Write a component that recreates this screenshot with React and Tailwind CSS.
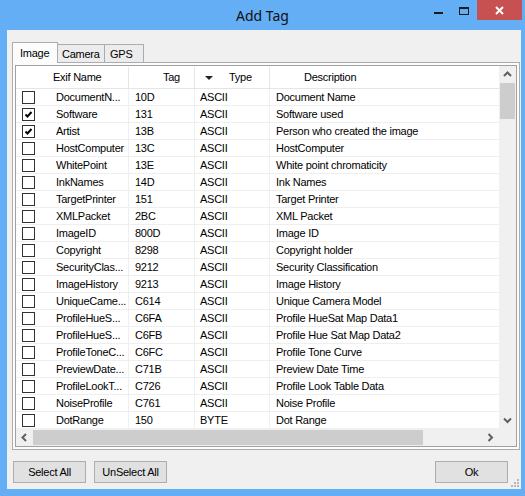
import React from "react";

const rows = [
  ["DocumentN...", "10D", "ASCII", "Document Name", false],
  ["Software", "131", "ASCII", "Software used", true],
  ["Artist", "13B", "ASCII", "Person who created the image", true],
  ["HostComputer", "13C", "ASCII", "HostComputer", false],
  ["WhitePoint", "13E", "ASCII", "White point chromaticity", false],
  ["InkNames", "14D", "ASCII", "Ink Names", false],
  ["TargetPrinter", "151", "ASCII", "Target Printer", false],
  ["XMLPacket", "2BC", "ASCII", "XML Packet", false],
  ["ImageID", "800D", "ASCII", "Image ID", false],
  ["Copyright", "8298", "ASCII", "Copyright holder", false],
  ["SecurityClas...", "9212", "ASCII", "Security Classification", false],
  ["ImageHistory", "9213", "ASCII", "Image History", false],
  ["UniqueCame...", "C614", "ASCII", "Unique Camera Model", false],
  ["ProfileHueS...", "C6FA", "ASCII", "Profile HueSat Map Data1", false],
  ["ProfileHueS...", "C6FB", "ASCII", "Profile Hue Sat Map Data2", false],
  ["ProfileToneC...", "C6FC", "ASCII", "Profile Tone Curve", false],
  ["PreviewDate...", "C71B", "ASCII", "Preview Date Time", false],
  ["ProfileLookT...", "C726", "ASCII", "Profile Look Table Data", false],
  ["NoiseProfile", "C761", "ASCII", "Noise Profile", false],
  ["DotRange", "150", "BYTE", "Dot Range", false],
];

const Check = ({ checked }) => (
  <span className="w-[13px] h-[13px] border border-[#333333] bg-white flex items-center justify-center shrink-0">
    {checked && (
      <svg width="9" height="9" viewBox="0 0 9 9">
        <path d="M1.5 4.5 L3.5 6.5 L7.5 2" fill="none" stroke="#000" strokeWidth="2" />
      </svg>
    )}
  </span>
);

// small scrollbar chevron, dir = up/down/left/right
const Chevron = ({ dir }) => {
  const d = {
    up: "M1 5 L4.5 1.5 L8 5",
    down: "M1 1.5 L4.5 5 L8 1.5",
    left: "M5 1 L1.5 4.5 L5 8",
    right: "M1.5 1 L5 4.5 L1.5 8",
  }[dir];
  const vert = dir === "up" || dir === "down";
  return (
    <svg width={vert ? 9 : 7} height={vert ? 7 : 9} viewBox={vert ? "0 0 9 7" : "0 0 7 9"}>
      <path d={d} fill="none" stroke="#606060" strokeWidth="2" />
    </svg>
  );
};

const WinButton = ({ children }) => (
  <button className="w-[73px] h-[22px] border border-[#adadad] bg-[#e1e1e1] text-[11px] text-black flex items-center justify-center pt-px">
    {children}
  </button>
);

export default function App() {
  return (
    <div className="w-[525px] h-[496px] bg-[#64aef6] flex flex-col overflow-hidden font-['Liberation_Sans',Arial,sans-serif] tracking-[-0.25px] text-black">
      {/* Title bar */}
      <div className="relative h-[30px] shrink-0 flex items-center justify-center">
        <span className="text-[14px] tracking-normal font-['Noto_Sans',sans-serif] text-[#111]">Add Tag</span>
        <div className="absolute top-0 right-[3px] flex items-start">
          <div className="w-[26px] h-[20px] flex justify-center pt-[12px]">
            <span className="block w-[9px] h-[2px] bg-[#1b1b1b]" />
          </div>
          <div className="w-[26px] h-[20px] flex justify-center pt-[7px]">
            <span className="block w-[10px] h-[8px] border border-t-2 border-[#1b1b1b]" />
          </div>
          <div className="w-[45px] h-[20px] bg-[#c75050] flex items-center justify-center">
            <svg width="9" height="9" viewBox="0 0 9 9">
              <path d="M1 1 L8 8 M8 1 L1 8" stroke="#fff" strokeWidth="2" />
            </svg>
          </div>
        </div>
      </div>

      {/* Window body */}
      <div className="relative ml-[7px] mr-[4px] h-[459px] bg-[#f0f0f0] flex flex-col">
        {/* Tabs */}
        <div className="flex items-end h-[20px] mt-[12px] ml-[5px]">
          <div className="relative z-10 w-[46px] h-[21px] -mb-px border border-b-0 border-[#acacac] bg-[#fcfcfc] flex items-center pl-[7px] text-[11px]">
            Image
          </div>
          <div className="w-[47px] h-[18px] border-t border-r border-[#acacac] bg-[#ececec] flex items-center pl-[4px] pt-px text-[11px]">
            Camera
          </div>
          <div className="w-[39px] h-[18px] border-t border-r border-[#acacac] bg-[#ececec] flex items-center pl-[5px] pt-px text-[11px]">
            GPS
          </div>
        </div>

        {/* Tab panel */}
        <div className="ml-[5px] w-[508px] h-[388px] border border-[#acacac] bg-[#fcfcfc] p-[2px]">
          <div className="w-[502px] h-[382px] border border-[#a0a0a0] bg-white flex flex-col text-[11px]">
            <div className="flex h-[363px]">
              {/* List */}
              <div className="w-[483px] overflow-hidden">
                <div className="flex w-[556px] h-[23px] border-b border-[#e5e5e5] pt-px">
                  <div className="w-[113px] border-r border-[#e5e5e5] flex items-center pl-[37px]">Exif Name</div>
                  <div className="w-[66px] border-r border-[#e5e5e5] flex items-center justify-end pr-[14px]">Tag</div>
                  <div className="w-[75px] border-r border-[#e5e5e5] flex items-center pl-[10px] gap-[16px]">
                    <svg width="8" height="4" viewBox="0 0 8 4">
                      <path d="M0 0 H8 L4 4 Z" fill="#222" />
                    </svg>
                    <span>Type</span>
                  </div>
                  <div className="w-[302px] flex items-center pl-[34px]">Description</div>
                </div>
                {rows.map(([name, tag, type, desc, checked], i) => (
                  <div key={i} className="flex w-[556px] h-[17px] border-b border-[#efefef]">
                    <div className="w-[113px] border-r border-[#efefef] flex items-center pl-[6px] whitespace-nowrap">
                      <Check checked={checked} />
                      <span className="ml-[21px] pt-px">{name}</span>
                    </div>
                    <div className="w-[66px] border-r border-[#efefef] flex items-center pl-[6px] pt-px">{tag}</div>
                    <div className="w-[75px] border-r border-[#efefef] flex items-center pl-[5px] pt-px">{type}</div>
                    <div className="w-[302px] flex items-center pl-[6px] pt-px whitespace-nowrap">{desc}</div>
                  </div>
                ))}
              </div>

              {/* Vertical scrollbar */}
              <div className="w-[17px] bg-[#f0f0f0] flex flex-col">
                <div className="h-[17px] flex items-center justify-center">
                  <Chevron dir="up" />
                </div>
                <div className="h-[36px] mx-px bg-[#cdcdcd]" />
                <div className="flex-1" />
                <div className="h-[17px] flex items-center justify-center">
                  <Chevron dir="down" />
                </div>
              </div>
            </div>

            {/* Horizontal scrollbar */}
            <div className="flex h-[17px]">
              <div className="w-[483px] bg-[#f0f0f0] flex">
                <div className="w-[17px] flex items-center justify-center">
                  <Chevron dir="left" />
                </div>
                <div className="w-[390px] my-px bg-[#cdcdcd]" />
                <div className="flex-1" />
                <div className="w-[17px] flex items-center justify-center">
                  <Chevron dir="right" />
                </div>
              </div>
              <div className="w-[17px] bg-[#f0f0f0]" />
            </div>
          </div>
        </div>

        {/* Buttons */}
        <div className="flex justify-between mt-[11px] ml-[6px] mr-[13px]">
          <div className="flex gap-[8px]">
            <WinButton>Select All</WinButton>
            <WinButton>UnSelect All</WinButton>
          </div>
          <WinButton>Ok</WinButton>
        </div>

        {/* Size grip */}
        <svg className="absolute right-[2px] bottom-[2px]" width="8" height="8" viewBox="0 0 8 8">
          <rect x="6" y="0" width="2" height="2" fill="#b8b8b8" />
          <rect x="3" y="3" width="2" height="2" fill="#b8b8b8" />
          <rect x="6" y="3" width="2" height="2" fill="#b8b8b8" />
          <rect x="0" y="6" width="2" height="2" fill="#b8b8b8" />
          <rect x="3" y="6" width="2" height="2" fill="#b8b8b8" />
          <rect x="6" y="6" width="2" height="2" fill="#b8b8b8" />
        </svg>
      </div>
    </div>
  );
}
